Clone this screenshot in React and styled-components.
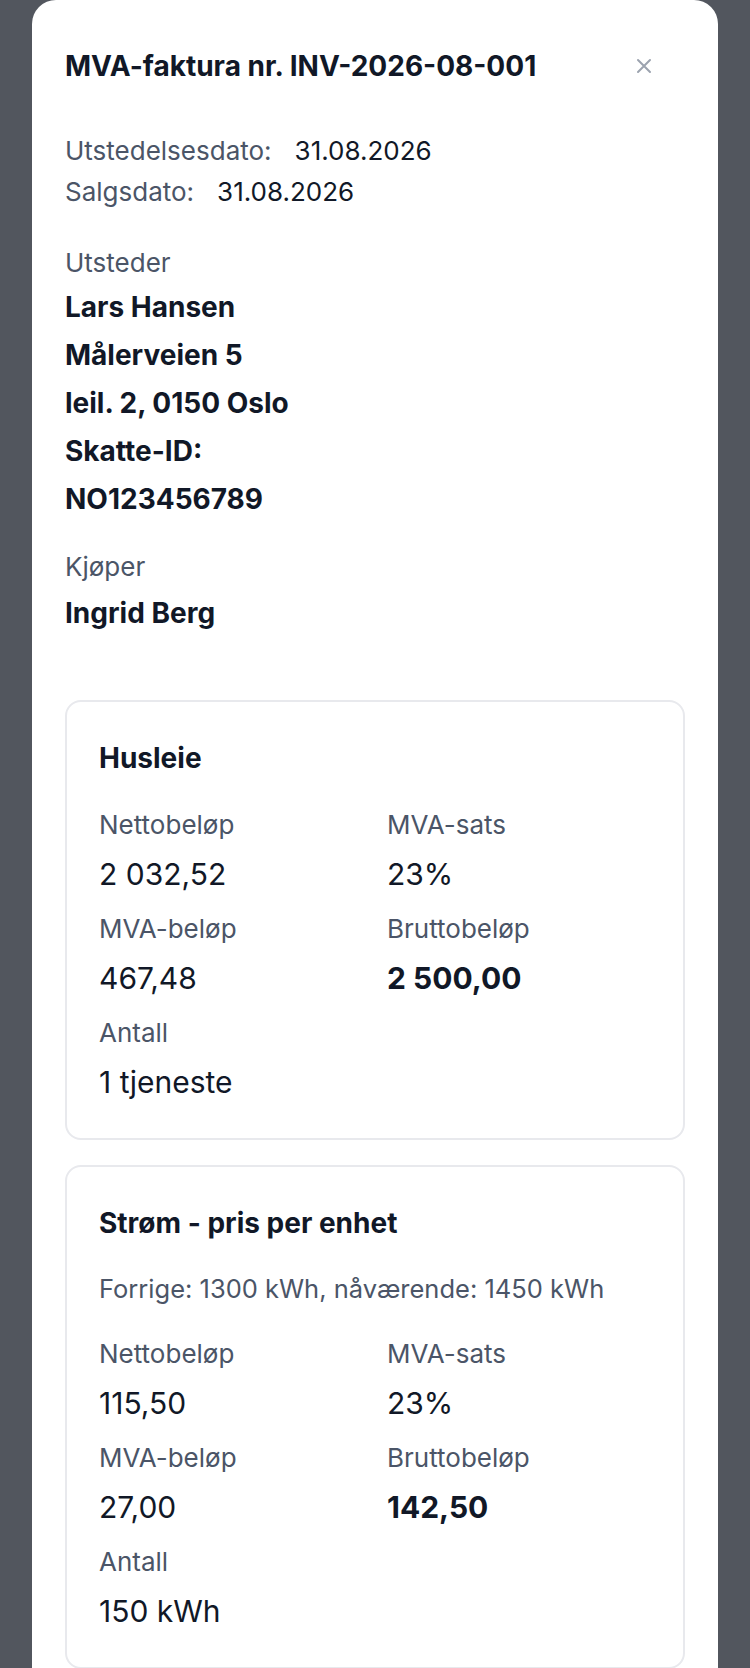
import React from "react";
import styled, { createGlobalStyle } from "styled-components";

const Global = createGlobalStyle`
  html, body { margin: 0; padding: 0; }
  body {
    background: #52565e;
    font-family: Inter, "Noto Sans", sans-serif;
    -webkit-font-smoothing: antialiased;
  }
`;

const Backdrop = styled.div`
  min-height: 1668px;
  display: flex;
  justify-content: center;
  padding: 0 32px;
  box-sizing: border-box;
`;

const Modal = styled.div`
  width: 686px;
  background: #ffffff;
  border-radius: 24px 24px 0 0;
  padding: 48px 33px 0;
  box-sizing: border-box;
  color: #111827;
`;

const Header = styled.div`
  display: flex;
  align-items: center;
  justify-content: space-between;
  height: 36px;
`;

const Title = styled.h1`
  margin: 0;
  font-size: 28px;
  line-height: 36px;
  font-weight: 700;
  color: #111827;
`;

const Close = styled.button`
  border: none;
  background: none;
  padding: 0;
  width: 24px;
  height: 24px;
  margin-right: 29px;
  display: flex;
  align-items: center;
  justify-content: center;
  color: #9ca3af;
  cursor: pointer;
`;

const Dates = styled.div`
  margin-top: 46px;
  display: flex;
  flex-direction: column;
`;

const DateRow = styled.div`
  font-size: 26px;
  line-height: 41px;
  display: flex;
  gap: 23px;
`;

const Muted = styled.span`
  color: #4b5567;
`;

const Strong = styled.span`
  color: #111827;
`;

const Party = styled.section`
  margin-top: ${(p) => p.$top}px;
  display: flex;
  flex-direction: column;
  gap: ${(p) => p.$gap}px;
`;

const PartyLabel = styled.div`
  font-size: 26px;
  line-height: 36px;
  color: #4b5567;
`;

const PartyLines = styled.div`
  font-size: 28px;
  line-height: 48px;
  font-weight: 700;
  color: #111827;
`;

const Cards = styled.div`
  margin-top: 63px;
  display: flex;
  flex-direction: column;
  gap: 25px;
`;

const Card = styled.div`
  border: 2px solid #e8e9ed;
  border-radius: 16px;
  padding: 38px 32px 36px;
  display: flex;
  flex-direction: column;
  gap: 31px;
`;

const CardTitle = styled.h2`
  margin: 0;
  font-size: 28px;
  line-height: 36px;
  font-weight: 700;
  color: #111827;
`;

const Note = styled.div`
  font-size: 25.5px;
  line-height: 34px;
  color: #4b5567;
  margin: 0 0 -1px;
`;

const Grid = styled.div`
  display: grid;
  grid-template-columns: 1fr 1fr;
  column-gap: 24px;
  row-gap: 17px;
`;

const Field = styled.div`
  display: flex;
  flex-direction: column;
  gap: 11px;
`;

const FieldLabel = styled.div`
  font-size: 26px;
  line-height: 36px;
  color: #4b5567;
`;

const FieldValue = styled.div`
  font-size: 30px;
  line-height: 40px;
  font-weight: ${(p) => (p.$bold ? 700 : 400)};
  color: #111827;
`;

const items = [
  {
    title: "Husleie",
    net: "2 032,52",
    rate: "23%",
    vat: "467,48",
    gross: "2 500,00",
    qty: "1 tjeneste",
  },
  {
    title: "Strøm - pris per enhet",
    note: "Forrige: 1300 kWh, nåværende: 1450 kWh",
    net: "115,50",
    rate: "23%",
    vat: "27,00",
    gross: "142,50",
    qty: "150 kWh",
  },
];

function ItemCard({ item }) {
  return (
    <Card>
      <CardTitle>{item.title}</CardTitle>
      {item.note && <Note>{item.note}</Note>}
      <Grid>
        <Field>
          <FieldLabel>Nettobeløp</FieldLabel>
          <FieldValue>{item.net}</FieldValue>
        </Field>
        <Field>
          <FieldLabel>MVA-sats</FieldLabel>
          <FieldValue>{item.rate}</FieldValue>
        </Field>
        <Field>
          <FieldLabel>MVA-beløp</FieldLabel>
          <FieldValue>{item.vat}</FieldValue>
        </Field>
        <Field>
          <FieldLabel>Bruttobeløp</FieldLabel>
          <FieldValue $bold>{item.gross}</FieldValue>
        </Field>
        <Field>
          <FieldLabel>Antall</FieldLabel>
          <FieldValue>{item.qty}</FieldValue>
        </Field>
      </Grid>
    </Card>
  );
}

export default function App() {
  return (
    <>
      <Global />
      <Backdrop>
        <Modal>
          <Header>
            <Title>MVA-faktura nr. INV-2026-08-001</Title>
            <Close aria-label="Lukk">
              <svg width="16" height="16" viewBox="0 0 16 16" fill="none">
                <path d="M2 2L14 14M14 2L2 14" stroke="currentColor" strokeWidth="2" strokeLinecap="round" />
              </svg>
            </Close>
          </Header>
          <Dates>
            <DateRow>
              <Muted>Utstedelsesdato:</Muted>
              <Strong>31.08.2026</Strong>
            </DateRow>
            <DateRow>
              <Muted>Salgsdato:</Muted>
              <Strong>31.08.2026</Strong>
            </DateRow>
          </Dates>
          <Party $top={33} $gap={2}>
            <PartyLabel>Utsteder</PartyLabel>
            <PartyLines>
              <div>Lars Hansen</div>
              <div>Målerveien 5</div>
              <div>leil. 2, 0150 Oslo</div>
              <div>Skatte-ID:</div>
              <div>NO123456789</div>
            </PartyLines>
          </Party>
          <Party $top={26} $gap={4}>
            <PartyLabel>Kjøper</PartyLabel>
            <PartyLines>
              <div>Ingrid Berg</div>
            </PartyLines>
          </Party>
          <Cards>
            {items.map((it) => (
              <ItemCard key={it.title} item={it} />
            ))}
          </Cards>
        </Modal>
      </Backdrop>
    </>
  );
}
